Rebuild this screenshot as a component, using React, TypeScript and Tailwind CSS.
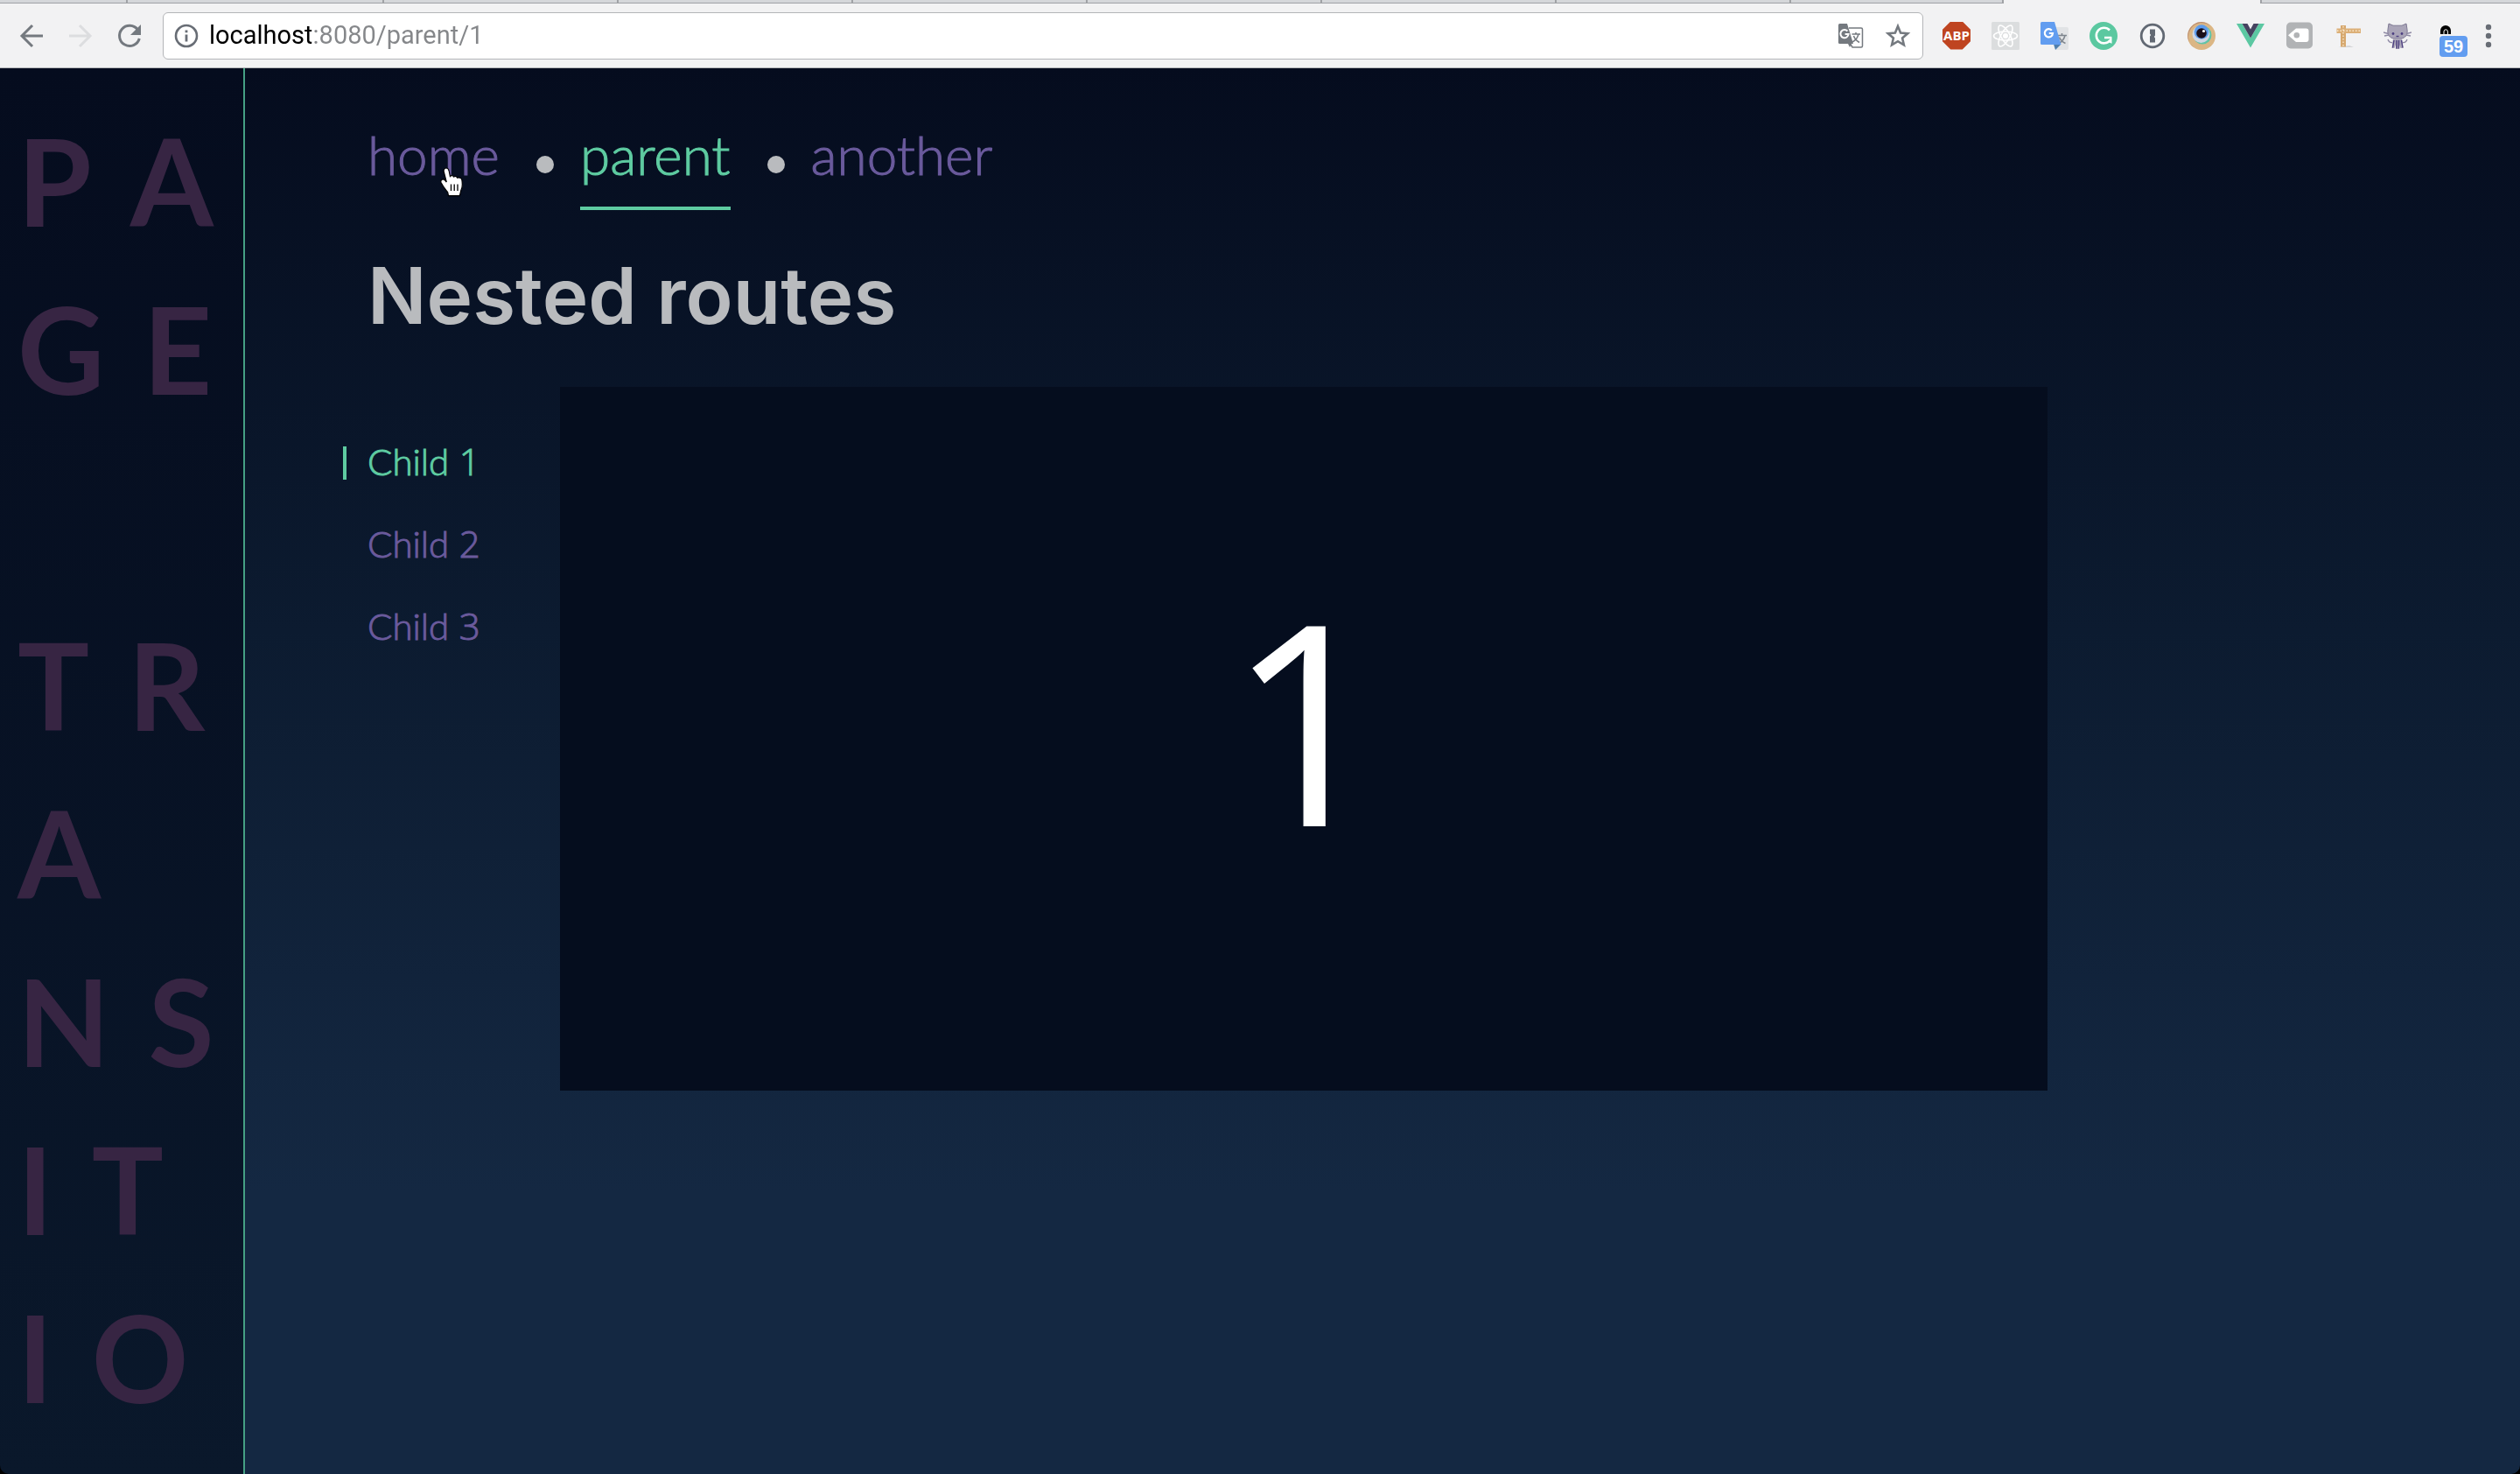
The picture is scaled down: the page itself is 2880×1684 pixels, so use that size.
import type { ReactNode } from "react";

const TABS = [
  "w-[146px]",
  "w-[293px]",
  "w-[268px]",
  "w-[268px]",
  "w-[268px]",
  "w-[268px]",
  "w-[268px]",
  "w-[268px]",
  "w-[243px]",
];

function TabStrip() {
  return (
    <div className="flex h-1 overflow-hidden">
      {TABS.map((w, i) => (
        <div key={i} className={`${w} shrink-0 border-r-2 border-b border-[#a0a2a6] bg-[#d5d7da]`} />
      ))}
      <div className="w-[293px] shrink-0" />
      <div className="flex-1 border-b border-l-2 border-[#a0a2a6] bg-[#d5d7da]" />
    </div>
  );
}

function IconButton({ label, children }: { label: string; children: ReactNode }) {
  return (
    <button type="button" aria-label={label} className="flex size-8 shrink-0 items-center justify-center">
      {children}
    </button>
  );
}

const svg = { viewBox: "0 0 32 32", className: "size-8" };

function BackIcon() {
  return (
    <svg {...svg} fill="none" stroke="#74797f" strokeWidth="3">
      <path d="M29 16H5M17 4L5 16l12 12" />
    </svg>
  );
}

function ForwardIcon() {
  return (
    <svg {...svg} fill="none" stroke="#dcdddf" strokeWidth="3">
      <path d="M3 16h24M15 4l12 12-12 12" />
    </svg>
  );
}

function ReloadIcon() {
  return (
    <svg {...svg}>
      <path d="M25.5 9A11.6 11.6 0 1 0 27.3 19" fill="none" stroke="#74797f" strokeWidth="3" />
      <path d="M29 3v12H17z" fill="#74797f" />
    </svg>
  );
}

function InfoIcon() {
  return (
    <svg viewBox="0 0 28 28" className="size-7 shrink-0">
      <circle cx="14" cy="14" r="12" fill="none" stroke="#686d75" strokeWidth="2.6" />
      <path d="M12.6 12.4h2.8v8h-2.8zM12.6 7.4h2.8v2.8h-2.8z" fill="#686d75" />
    </svg>
  );
}

function PageTranslateIcon() {
  return (
    <svg {...svg}>
      <path d="M14 7h14q1.500 0 1.500 1.500v19q0 1.500-1.500 1.500H18l-3-5" fill="#fff" stroke="#74797f" strokeWidth="1.500" />
      <path d="M3.500 2H12l7 23H3.500Q2 25 2 23.500v-20Q2 2 3.500 2z" fill="#74797f" />
      <path d="M17 25l-2 4-2-4z" fill="#74797f" />
      <path d="M12.400 10.500A4.600 4.600 0 1 0 13.600 14H9.600" fill="none" stroke="#fff" strokeWidth="2" />
      <path d="M17.500 14H27M22 12v2M25 14c-1 4-4 7.500-7 9M19.500 16c1 3 4 6 6.500 7.500" fill="none" stroke="#74797f" strokeWidth="1.500" />
    </svg>
  );
}

function StarIcon() {
  return (
    <svg {...svg} fill="none" stroke="#74797f" strokeWidth="2.600">
      <path d="M16 5l3.100 7.500 8.100.7-6.100 5.300 1.800 7.900L16 22.200l-6.900 4.200 1.800-7.900-6.100-5.300 8.100-.7z" />
    </svg>
  );
}

function AdblockIcon() {
  return (
    <span className="flex size-8 items-center justify-center bg-[#bf4420] font-['Open_Sans',sans-serif] text-[15px] leading-none font-bold text-white [clip-path:polygon(29%_0,71%_0,100%_29%,100%_71%,71%_100%,29%_100%,0_71%,0_29%)]">
      ABP
    </span>
  );
}

function ReactIcon() {
  return (
    <svg {...svg}>
      <rect width="32" height="32" rx="1.500" fill="#dbddde" />
      <g fill="none" stroke="#fff" strokeWidth="1.600">
        <ellipse cx="16" cy="16" rx="13.500" ry="5" />
        <ellipse cx="16" cy="16" rx="13.500" ry="5" transform="rotate(60 16 16)" />
        <ellipse cx="16" cy="16" rx="13.500" ry="5" transform="rotate(120 16 16)" />
      </g>
      <circle cx="16" cy="16" r="3" fill="#fff" />
    </svg>
  );
}

function GoogleTranslateIcon() {
  return (
    <svg {...svg}>
      <path d="M16 6h14q2 0 2 2v22q0 2-2 2H17z" fill="#e1e3e5" />
      <path d="M19 15.500h11M24.500 13v2.500M28 15.500c-1 4-4 7.500-7 9M21.500 17.500c1 3 4 5.500 7 7" fill="none" stroke="#7f868e" strokeWidth="1.600" />
      <path d="M15 25.500h8.500L17 32z" fill="#4f7fae" />
      <path d="M1.500 0H16l7.500 26h-22Q0 26 0 24.500v-23Q0 0 1.500 0z" fill="#629df0" />
      <path d="M12.800 9.700A4.600 4.600 0 1 0 14 13H9.800" fill="none" stroke="#fff" strokeWidth="2.200" />
    </svg>
  );
}

function GrammarlyIcon() {
  return (
    <svg {...svg}>
      <circle cx="16" cy="16" r="16" fill="#5bc8a0" />
      <path d="M23 9.500A8.800 8.800 0 1 0 23.500 21M17 18h8" fill="none" stroke="#fff" strokeWidth="2.600" />
      <path d="M25.500 16.700v8l-4.500-2z" fill="#fff" />
    </svg>
  );
}

function OnePasswordIcon() {
  return (
    <svg {...svg}>
      <circle cx="16" cy="16" r="12.800" fill="#f5f6f7" stroke="#626973" strokeWidth="2.800" />
      <path d="M13 8.500h6v7l-1.200 1.500 1.200 1.500v5h-6v-7l1.200-1.500L13 13.500z" fill="#626973" />
    </svg>
  );
}

function EyeIcon() {
  return (
    <svg {...svg}>
      <circle cx="16" cy="16" r="16" fill="#dbb684" />
      <path d="M16 0a16 16 0 0 0-9 29A13.500 13.500 0 0 1 26 4.500 16 16 0 0 0 16 0z" fill="#b98b72" />
      <circle cx="17" cy="15" r="10.500" fill="#5fc4a8" />
      <circle cx="15.500" cy="14" r="10" fill="#cfd6e2" />
      <circle cx="16" cy="11.500" r="8.300" fill="#5e9cec" />
      <circle cx="16" cy="13" r="5.800" fill="#1c0f1a" />
      <circle cx="18.500" cy="10.500" r="1.600" fill="#fff" />
    </svg>
  );
}

function VueIcon() {
  return (
    <svg {...svg}>
      <path d="M0 2h6.500L16 18.500 25.500 2H32L16 29.500z" fill="#5cc8a2" />
      <path d="M6.500 2h6L16 8.500 19.500 2h6L16 18.500z" fill="#45435f" />
    </svg>
  );
}

function TagIcon() {
  return (
    <svg {...svg}>
      <rect x="1" y="0.500" width="30" height="30" rx="5" fill="#b1b3b5" />
      <path d="M12 7.500h11.500q3 0 3 3v9.500q0 3-3 3H12l-9-7.700z" fill="#fff" />
      <circle cx="12.800" cy="15.200" r="3.300" fill="#b1b3b5" />
    </svg>
  );
}

function RulerIcon() {
  return (
    <svg {...svg}>
      <path d="M4 29h18l-5-2z" fill="#d4d5d7" />
      <path d="M7 4h6v24.500H7z" fill="#d6a86e" />
      <path d="M2.500 7.500H30V13H2.500z" fill="#dcb078" />
      <path d="M10 5v23M3 10.200h26" fill="none" stroke="#fff2dc" strokeWidth="1.200" strokeDasharray="1.500 2" />
    </svg>
  );
}

function OctocatIcon() {
  return (
    <svg {...svg}>
      <path d="M6 2l5 2.200h10L26 2l1 6.500c1 6-2 10-7 10.500h-8C7 18.500 4 14.500 5 8.500z" fill="#aaa5b8" stroke="#7d7892" />
      <path d="M11 19h10l1.500 11h-3L18 26v5h-4v-5l-1.500 4h-3z" fill="#aaa5b8" />
      <path d="M12 21l-1.500 8.500M15 21v9.500M17.500 21v9.500M20.500 21l1.500 8.500" fill="none" stroke="#4c3f80" strokeWidth="1.400" />
      <path d="M0 12l5.500 1.500M1 16l5-1M32 12l-5.500 1.500M31 16l-5-1M5 20c1 3 2 4 5 3.500M27 20c-1 3-2 4-5 3.500" fill="none" stroke="#8f8aa5" strokeWidth="1.300" />
      <circle cx="11" cy="13.500" r="1.400" fill="#4c3f80" />
      <circle cx="21" cy="13.500" r="1.400" fill="#4c3f80" />
      <path d="M14.500 16.500h3" stroke="#4c3f80" strokeWidth="1.400" />
    </svg>
  );
}

function CounterIcon() {
  return (
    <span className="flex h-12 w-8 flex-col pt-3">
      <svg viewBox="0 0 32 12" className="h-3 w-8">
        <path d="M1 10V6a6 6 0 0 1 12 0v4z" fill="#000" />
        <path d="M5 10V7a2.200 2.200 0 0 1 4.400 0v3" fill="none" stroke="#fff" />
      </svg>
      <span className="flex h-6 shrink-0 items-center justify-center rounded-[4px] bg-[#629df0] font-['Liberation_Sans',sans-serif] text-[20px] leading-none font-bold text-white">
        59
      </span>
    </span>
  );
}

function MenuIcon() {
  return (
    <svg viewBox="0 0 8 32" className="h-8 w-2" fill="#686d75">
      <circle cx="4" cy="6" r="3.200" />
      <circle cx="4" cy="16" r="3.200" />
      <circle cx="4" cy="26" r="3.200" />
    </svg>
  );
}

function Toolbar() {
  return (
    <header className="border-b border-[#b4b6b9] bg-[#f2f2f3]">
      <TabStrip />
      <div className="flex h-[73px] items-center pr-8 pl-5">
        <div className="flex gap-6">
          <IconButton label="Back"><BackIcon /></IconButton>
          <IconButton label="Forward"><ForwardIcon /></IconButton>
          <IconButton label="Reload"><ReloadIcon /></IconButton>
        </div>
        <div className="ml-[22px] flex h-[54px] flex-1 items-center rounded-[6px] border border-[#b3b5b8] bg-white pr-3 pl-3">
          <InfoIcon />
          <input
            type="text"
            aria-label="Address"
            defaultValue="localhost:8080/parent/1"
            className="ml-3 h-10 min-w-0 flex-1 bg-linear-to-r from-black from-[117px] to-[#85878a] to-[117px] bg-clip-text font-['Roboto',sans-serif] text-[29px] text-black outline-none [-webkit-text-fill-color:transparent]"
          />
          <div className="flex gap-[22px]">
            <IconButton label="Translate this page"><PageTranslateIcon /></IconButton>
            <IconButton label="Bookmark this page"><StarIcon /></IconButton>
          </div>
        </div>
        <div className="mr-8 ml-[22px] flex items-center gap-6">
          <IconButton label="Adblock Plus"><AdblockIcon /></IconButton>
          <IconButton label="React Developer Tools"><ReactIcon /></IconButton>
          <IconButton label="Google Translate"><GoogleTranslateIcon /></IconButton>
          <IconButton label="Grammarly"><GrammarlyIcon /></IconButton>
          <IconButton label="1Password"><OnePasswordIcon /></IconButton>
          <IconButton label="Eye dropper"><EyeIcon /></IconButton>
          <IconButton label="Vue devtools"><VueIcon /></IconButton>
          <IconButton label="Tags"><TagIcon /></IconButton>
          <IconButton label="Page ruler"><RulerIcon /></IconButton>
          <IconButton label="Octocat"><OctocatIcon /></IconButton>
        </div>
        <IconButton label="Counter"><CounterIcon /></IconButton>
        <button type="button" aria-label="Menu" className="ml-5">
          <MenuIcon />
        </button>
      </div>
    </header>
  );
}

const TITLE_ROWS = ["PA", "GE", "", "TR", "A", "NS", "IT", "IO"];

function Sidebar() {
  return (
    <aside className="w-[280px] shrink-0 overflow-hidden border-r-2 border-[#45a084] bg-linear-to-b/srgb from-[#050c1e] to-[#0a182b] pt-8 pl-5 text-[137px] leading-[192px] font-bold text-[#372543]">
      {TITLE_ROWS.map((row, i) => (
        <div key={i} className="flex h-48 gap-11">
          {row.split("").map((letter) => (
            <span key={letter}>{letter}</span>
          ))}
        </div>
      ))}
    </aside>
  );
}

function HandCursor() {
  return (
    <svg viewBox="0 0 30 34" className="absolute top-[51px] left-[82px] h-[34px] w-[30px]">
      <path
        d="M8 1c2 0 2.800 1.500 3.200 3.500l1.200 6c1-1.300 3.500-1.200 4.300.5 1.500-1 3.500-.5 4 1.200 2-.8 5 .3 5.200 2.500.7 4.500 1 8-1 11.500l-1.500 6.500H10.500l-.8-4C7 25.500 4.500 22 2 17.500c-1-3 2.300-4.700 4.300-2.800l2 2.300L5.200 5C4.700 3 6.200 1 8 1z"
        fill="#fff"
        stroke="#000"
        strokeWidth="1.200"
      />
      <path d="M13.500 19.500v7.500M17.200 19.500v7.500M21 19.500v7.500" stroke="#000" strokeWidth="1.300" />
    </svg>
  );
}

function NavDot() {
  return <span className="mt-[38px] mr-[30px] ml-[42px] size-5 rounded-full bg-[#b9bbbe]" />;
}

function MainNav() {
  return (
    <nav className="flex items-start text-[62px] leading-[72px] font-light text-[#6a5a9c] [-webkit-text-stroke:1px_currentColor]">
      <a href="#home" className="relative">
        home
        <HandCursor />
      </a>
      <NavDot />
      <a href="#parent" aria-current="page" className="border-b-4 border-[#5ecba1] pb-6 text-[#5ecba1]">
        parent
      </a>
      <NavDot />
      <a href="#another">another</a>
    </nav>
  );
}

function ChildLink({ n, active }: { n: number; active?: boolean }) {
  return (
    <a
      href={`#parent/${n}`}
      className={active ? "relative block text-[#5ecba1]" : "block text-[#6a5a9c]"}
    >
      {active && <span className="absolute top-[30px] -left-7 h-[38px] w-1 bg-[#5ecba1]" />}
      Child <span className="font-['Open_Sans',sans-serif] leading-none">{n}</span>
    </a>
  );
}

export default function App() {
  return (
    <div className="h-screen bg-black">
      <div className="flex h-full flex-col overflow-hidden rounded-b-[10px] font-['Lato',sans-serif]">
        <Toolbar />
        <div className="flex min-h-0 flex-1">
          <Sidebar />
          <main className="flex-1 bg-linear-to-b/srgb from-[#050c1e] via-[#0c1b30] via-40% to-[#142842] to-80% pt-[62px] pl-[140px]">
            <MainNav />
            <h1 className="mt-[50px] font-['Inter',sans-serif] text-[89px] leading-[96px] font-semibold text-[#b9bbbe]">
              Nested routes
            </h1>
            <div className="mt-14 flex max-w-[1920px]">
              <nav className="w-[220px] shrink-0 pt-[38px] text-[42px] leading-[94px] font-light [-webkit-text-stroke:1px_currentColor]">
                <ChildLink n={1} active />
                <ChildLink n={2} />
                <ChildLink n={3} />
              </nav>
              <section className="flex h-[804px] flex-1 items-center justify-center bg-[#050d1e] pb-12 pl-2 font-['Open_Sans',sans-serif] text-[320px] leading-none text-white">
                1
              </section>
            </div>
          </main>
        </div>
      </div>
    </div>
  );
}
